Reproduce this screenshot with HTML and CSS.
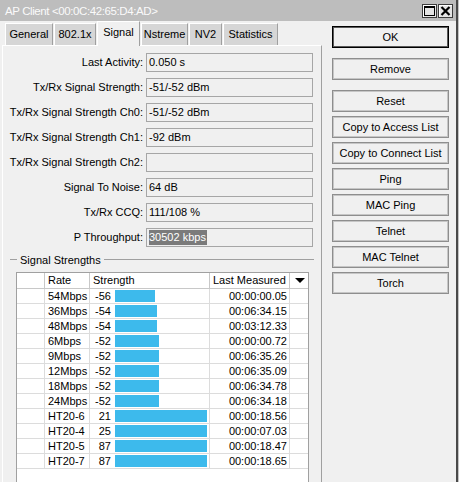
FILE: index.html
```html
<!DOCTYPE html>
<html>

<head>
    <meta charset="utf-8" />
    <title>AP Client</title>
    <link rel="stylesheet" href="styles.css">
</head>

<body>
    <div class="window">
        <!-- title bar -->
        <div class="titlebar">
            <span class="title">AP Client &lt;00:0C:42:65:D4:AD&gt;</span>
            <div class="winbtns">
                <span class="winbtn">
                    <svg width="11" height="10" viewBox="0 0 11 10"><rect x="0.5" y="0.5" width="10" height="9" fill="none" stroke="#000"/><rect x="0" y="0" width="11" height="2" fill="#000"/></svg>
                </span>
                <span class="winbtn">
                    <svg width="11" height="10" viewBox="0 0 11 10"><path d="M1.5 1 L9.5 9 M9.5 1 L1.5 9" stroke="#000" stroke-width="2.2"/></svg>
                </span>
            </div>
        </div>

        <div class="content">
            <div class="main">
                <div class="tabs">
                    <div class="tab t-general">General</div>
                    <div class="tab t-dot1x">802.1x</div>
                    <div class="tab t-signal active">Signal</div>
                    <div class="tab t-nstreme">Nstreme</div>
                    <div class="tab t-nv2">NV2</div>
                    <div class="tab t-stats">Statistics</div>
                </div>

                <div class="panel">
                    <div class="form">
                        <div class="row"><label>Last Activity:</label><div class="field">0.050 s</div></div>
                        <div class="row"><label>Tx/Rx Signal Strength:</label><div class="field">-51/-52 dBm</div></div>
                        <div class="row"><label>Tx/Rx Signal Strength Ch0:</label><div class="field">-51/-52 dBm</div></div>
                        <div class="row"><label>Tx/Rx Signal Strength Ch1:</label><div class="field">-92 dBm</div></div>
                        <div class="row"><label>Tx/Rx Signal Strength Ch2:</label><div class="field"></div></div>
                        <div class="row"><label>Signal To Noise:</label><div class="field">64 dB</div></div>
                        <div class="row"><label>Tx/Rx CCQ:</label><div class="field">111/108 %</div></div>
                        <div class="row"><label>P Throughput:</label><div class="field"><span class="sel">30502 kbps</span></div></div>
                    </div>

                    <div class="group">
                        <span class="dash"></span>
                        <span class="legend">Signal Strengths</span>
                        <span class="line"></span>
                    </div>

                    <div class="grid">
                        <div class="cell head"></div>
                        <div class="cell head">Rate</div>
                        <div class="cell head">Strength</div>
                        <div class="cell head">Last Measured</div>
                        <div class="cell head drop"><span class="arrow"></span></div>
                    </div>
                    <div class="gridbody" id="rows"></div>
                </div>
            </div>

            <div class="side">
                <div class="btn default">OK</div>
                <div class="btn gap">Remove</div>
                <div class="btn gap">Reset</div>
                <div class="btn">Copy to Access List</div>
                <div class="btn">Copy to Connect List</div>
                <div class="btn">Ping</div>
                <div class="btn">MAC Ping</div>
                <div class="btn">Telnet</div>
                <div class="btn">MAC Telnet</div>
                <div class="btn">Torch</div>
            </div>
        </div>
    </div>

    <script type="text/javascript">
        // rate, strength, bar width, last measured
        var rows = [
            ['54Mbps', '-56', 40, '00:00:00.05'],
            ['36Mbps', '-54', 42, '00:06:34.15'],
            ['48Mbps', '-54', 42, '00:03:12.33'],
            ['6Mbps', '-52', 44, '00:00:00.72'],
            ['9Mbps', '-52', 44, '00:06:35.26'],
            ['12Mbps', '-52', 44, '00:06:35.09'],
            ['18Mbps', '-52', 44, '00:06:34.78'],
            ['24Mbps', '-52', 44, '00:06:34.18'],
            ['HT20-6', '21', 92, '00:00:18.56'],
            ['HT20-4', '25', 92, '00:00:07.03'],
            ['HT20-5', '87', 92, '00:00:18.47'],
            ['HT20-7', '87', 92, '00:00:18.65']
        ];
        var html = '';
        for (var i = 0; i < rows.length; i++) {
            var r = rows[i];
            html += '<div class="cell"></div>' +
                '<div class="cell">' + r[0] + '</div>' +
                '<div class="cell strength"><span class="num">' + r[1] + '</span><span class="bar" style="width:' + r[2] + 'px"></span></div>' +
                '<div class="cell time">' + r[3] + '</div>' +
                '<div class="cell"></div>';
        }
        document.getElementById('rows').innerHTML = html;
    </script>
</body>

</html>
```

FILE: styles.css
```css
html,
body {
    margin: 0;
    height: 482px;
    overflow: hidden;
    background-color: #c4c4c4;
    font-family: "Liberation Sans", Arial, sans-serif;
    font-size: 11px;
    color: #000;
}

.window {
    display: flex;
    flex-direction: column;
    width: 456px;
    height: 496px;
    background-color: #f0f0f0;
    border-right: 2px solid #4a4a4a;
}

/* title bar */
.titlebar {
    display: flex;
    align-items: center;
    height: 21px;
    padding-left: 5px;
    padding-right: 3px;
    background-color: #bdbdbd;
    color: #fafafa;
    font-size: 11.5px;
    letter-spacing: -0.4px;
}

.winbtns {
    display: flex;
    gap: 1px;
    margin-left: auto;
    margin-top: 1px;
}

.winbtn {
    display: flex;
    align-items: center;
    justify-content: center;
    width: 13px;
    height: 12px;
    border: 1px solid #3c3c3c;
    background-color: #e4e4e4;
    box-shadow: inset 1px 1px 0 #fff;
}

.content {
    display: flex;
    flex: 1;
    min-height: 0;
}

/* left part: tabs + panel */
.main {
    display: flex;
    flex-direction: column;
    width: 320px;
    padding-left: 2px;
}

.tabs {
    display: flex;
    align-items: flex-end;
    gap: 1px;
    height: 24px;
    padding-left: 3px;
}

.tab {
    box-sizing: border-box;
    height: 22px;
    line-height: 20px;
    text-align: center;
    background-color: #d6d6d6;
    border-top: 1px solid #fff;
    border-left: 1px solid #fff;
    border-right: 1px solid #a0a0a0;
}

.tab.active {
    position: relative;
    height: 25px;
    line-height: 21px;
    margin-bottom: -1px;
    background-color: #f0f0f0;
    z-index: 1;
}

.t-general { width: 48px; }
.t-dot1x { width: 42px; }
.t-signal { width: 43px; }
.t-nstreme { width: 47px; }
.t-nv2 { width: 33px; }
.t-stats { width: 55px; }

.panel {
    display: flex;
    flex-direction: column;
    flex: 1;
    min-height: 0;
    padding-top: 7px;
    border-top: 1px solid #fff;
    border-left: 1px solid #fff;
    border-right: 1px solid #a0a0a0;
}

.form .row {
    display: flex;
    gap: 3px;
    height: 19px;
    margin-bottom: 6px;
}

.form label {
    width: 140px;
    line-height: 19px;
    text-align: right;
}

.form .field {
    box-sizing: border-box;
    width: 167px;
    height: 19px;
    padding-left: 2px;
    line-height: 17px;
    border: 1px solid #a6a6a6;
    background-color: #f0f0f0;
}

.form .sel {
    display: inline-block;
    line-height: 15px;
    padding-right: 1px;
    background-color: #7b7b7b;
    color: #fff;
}

/* group title */
.group {
    display: flex;
    align-items: center;
    height: 13px;
    margin-bottom: 6px;
}

.group .dash {
    width: 7px;
    height: 1px;
    margin-left: 7px;
    background-color: #a0a0a0;
}

.group .legend {
    padding: 0 3px;
}

.group .line {
    flex: 1;
    height: 1px;
    margin-right: 7px;
    background-color: #a0a0a0;
}

/* list */
.grid,
.gridbody {
    display: grid;
    grid-template-columns: 28px 45px 120px 80px 18px;
    width: 291px;
    margin-left: 13px;
    background-color: #fff;
    border-left: 1px solid #a0a0a0;
    border-right: 1px solid #a0a0a0;
}

.grid {
    border-top: 1px solid #a0a0a0;
}

.gridbody {
    flex: 1;
    align-content: start;
}

.cell {
    box-sizing: border-box;
    height: 15px;
    padding-left: 3px;
    line-height: 14px;
    white-space: nowrap;
    overflow: hidden;
    border-right: 1px solid #dcdcdc;
    border-bottom: 1px solid #dcdcdc;
}

.cell:nth-child(5n) {
    border-right: 0;
}

.cell.head {
    height: 16px;
    line-height: 15px;
    border-right-color: #c8c8c8;
    border-bottom-color: #c8c8c8;
}

.cell.drop {
    display: flex;
    align-items: center;
    justify-content: center;
}

.arrow {
    width: 0;
    height: 0;
    margin-left: -2px;
    border-left: 5px solid transparent;
    border-right: 5px solid transparent;
    border-top: 5px solid #000;
}

.cell.strength {
    display: flex;
    align-items: center;
}

.strength .num {
    width: 18px;
    text-align: right;
}

.strength .bar {
    height: 12px;
    margin-left: 4px;
    background-color: #3dbaec;
}

.cell.time {
    padding-left: 0;
    padding-right: 2px;
    text-align: right;
}

/* right buttons */
.side {
    display: flex;
    flex-direction: column;
    gap: 4px;
    padding-top: 5px;
    padding-left: 10px;
}

.btn {
    box-sizing: border-box;
    width: 117px;
    height: 22px;
    line-height: 20px;
    text-align: center;
    border: 1px solid #8e8e8e;
    box-shadow: inset 0 0 0 1px #c6c6c6;
    background-color: #f0f0f0;
}

.btn.default {
    border-color: #000;
    box-shadow: inset 0 0 0 1px #5a5a5a;
}

.btn.gap {
    margin-top: 6px;
}
```
